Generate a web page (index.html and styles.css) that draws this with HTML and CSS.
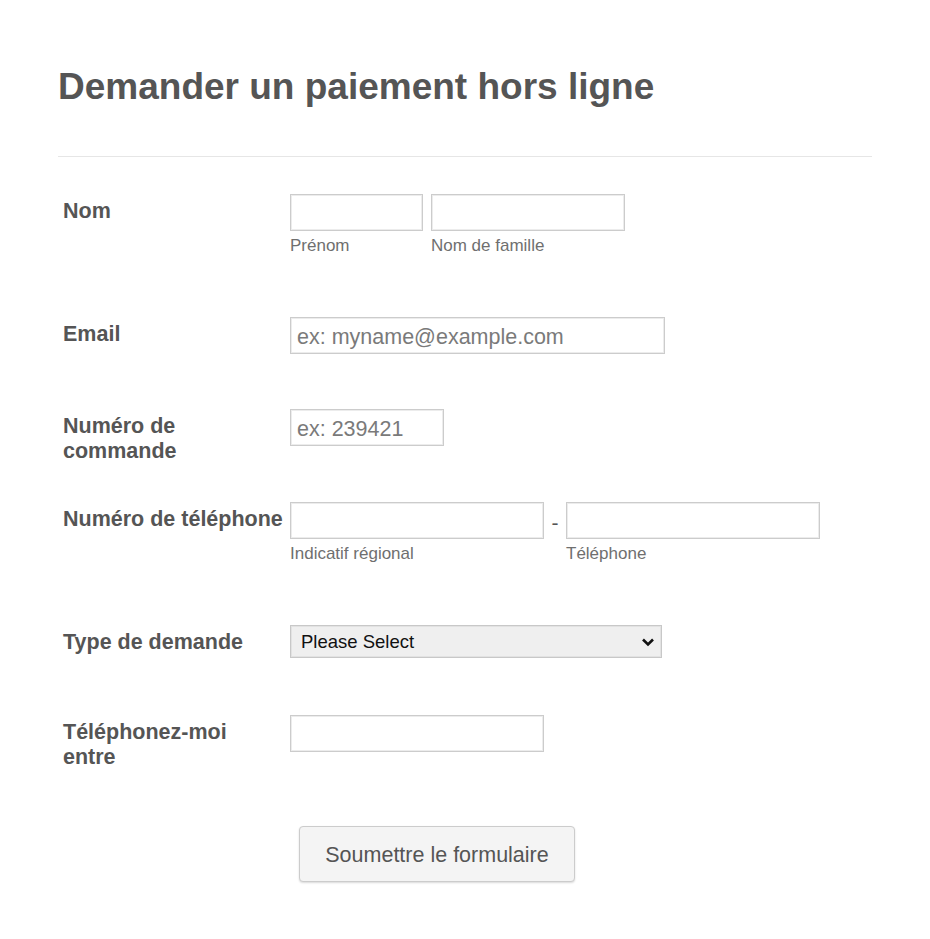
FILE: index.html
```html
<!DOCTYPE html>
<html lang="fr">
<head>
<meta charset="utf-8">
<title>Demander un paiement hors ligne</title>
<link rel="stylesheet" href="styles.css">
</head>
<body>
<main class="page">
  <h1 class="title">Demander un paiement hors ligne</h1>
  <hr class="divider">
  <form class="form">
    <div class="row row-nom">
      <label class="label">Nom</label>
      <div class="fields">
        <div class="field">
          <input class="input w-first" type="text">
          <span class="sub">Prénom</span>
        </div>
        <div class="field">
          <input class="input w-last" type="text">
          <span class="sub">Nom de famille</span>
        </div>
      </div>
    </div>

    <div class="row row-email">
      <label class="label">Email</label>
      <div class="fields">
        <input class="input w-email" type="text" placeholder="ex: myname@example.com">
      </div>
    </div>

    <div class="row row-order">
      <label class="label">Numéro de commande</label>
      <div class="fields">
        <input class="input w-order" type="text" placeholder="ex: 239421">
      </div>
    </div>

    <div class="row row-phone">
      <label class="label label-nowrap">Numéro de téléphone</label>
      <div class="fields fields-phone">
        <div class="field">
          <input class="input w-phone" type="text">
          <span class="sub">Indicatif régional</span>
        </div>
        <span class="dash">-</span>
        <div class="field">
          <input class="input w-phone" type="text">
          <span class="sub">Téléphone</span>
        </div>
      </div>
    </div>

    <div class="row row-type">
      <label class="label">Type de demande</label>
      <div class="fields">
        <div class="select-wrap">
          <select class="select">
            <option>Please Select</option>
          </select>
          <svg class="chevron" width="14" height="10" viewBox="0 0 14 10" aria-hidden="true">
            <path d="M2 2.5 L7 7.5 L12 2.5" fill="none" stroke="#111" stroke-width="2.6" stroke-linecap="butt" stroke-linejoin="miter"/>
          </svg>
        </div>
      </div>
    </div>

    <div class="row row-call">
      <label class="label">Téléphonez-moi entre</label>
      <div class="fields">
        <input class="input w-phone" type="text">
      </div>
    </div>

    <div class="buttons">
      <button class="submit" type="button">Soumettre le formulaire</button>
    </div>
  </form>
</main>
</body>
</html>
```

FILE: styles.css
```css
* { box-sizing: border-box; }

html, body {
  margin: 0;
  padding: 0;
  background: #ffffff;
}

body {
  font-family: "Liberation Sans", Arial, sans-serif;
  color: #555555;
}

.page {
  width: 814px;
  margin-left: 58px;
  padding-top: 65px;
}

.title {
  margin: 0;
  font-size: 37px;
  line-height: 44px;
  font-weight: 700;
  color: #555555;
}

.divider {
  margin: 47px 0 0 0;
  border: 0;
  border-top: 1px solid #e6e6e6;
  height: 0;
}

.form {
  padding-left: 5px;
}

.row {
  display: flex;
  align-items: flex-start;
}

.row-nom { margin-top: 37px; }
.row-email { margin-top: 61px; }
.row-order { margin-top: 55px; }
.row-phone { margin-top: 38px; }
.row-type { margin-top: 61px; }
.row-call { margin-top: 57px; }

.label {
  width: 227px;
  flex: 0 0 227px;
  padding-top: 5px;
  padding-right: 17px;
  font-size: 21.5px;
  line-height: 25px;
  font-weight: 700;
  color: #555555;
}

.label-nowrap {
  white-space: nowrap;
  padding-right: 0;
}

.fields {
  display: flex;
  align-items: flex-start;
  gap: 8px;
}

.fields-phone { gap: 0; }

.field {
  display: flex;
  flex-direction: column;
}

.input {
  height: 37px;
  border: 1px solid #cccccc;
  box-shadow: inset 0 0 0 1px #ececec;
  background: #ffffff;
  padding: 3px 6px 0 6px;
  font-family: "Liberation Sans", Arial, sans-serif;
  font-size: 21.5px;
  color: #555555;
  outline: none;
  border-radius: 0;
}

.input::placeholder {
  color: #7a7a7a;
}

.w-first { width: 133px; }
.w-last { width: 194px; }
.w-email { width: 375px; }
.w-order { width: 154px; }
.w-phone { width: 254px; }

.sub {
  margin-top: 5px;
  font-size: 17px;
  line-height: 20px;
  color: #6f6f6f;
}

.dash {
  width: 22px;
  text-align: center;
  font-size: 21px;
  line-height: 25px;
  padding-top: 8px;
  color: #555555;
}

.select-wrap {
  position: relative;
  width: 372px;
  height: 33px;
}

.select {
  -webkit-appearance: none;
  appearance: none;
  width: 372px;
  height: 33px;
  border: 1px solid #c8c8c8;
  box-shadow: inset 0 0 0 1px #e2e2e2;
  background: #efefef;
  padding: 0 30px 0 10px;
  font-family: "Liberation Sans", Arial, sans-serif;
  font-size: 18.5px;
  color: #111111;
  border-radius: 0;
  outline: none;
}

.chevron {
  position: absolute;
  right: 7px;
  top: 12px;
  pointer-events: none;
}

.buttons {
  margin-top: 56px;
  padding-left: 236px;
  padding-bottom: 40px;
}

.submit {
  width: 276px;
  height: 56px;
  border: 1px solid #cccccc;
  border-radius: 4px;
  background: #f4f4f4;
  box-shadow: 0 1px 2px rgba(0,0,0,0.15);
  font-family: "Liberation Sans", Arial, sans-serif;
  font-size: 21.5px;
  color: #555555;
  padding: 2px 0 0 0;
}
```
